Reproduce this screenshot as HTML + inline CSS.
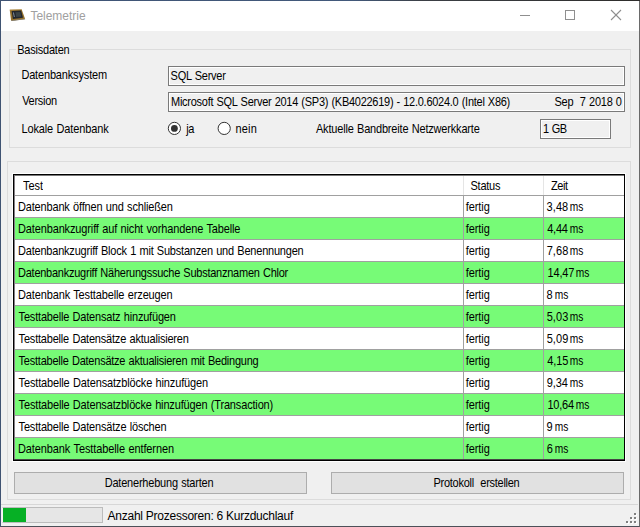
<!DOCTYPE html>
<html lang="de"><head><meta charset="utf-8"><title>Telemetrie</title>
<style>
html,body{margin:0;padding:0;}
body{width:640px;height:527px;overflow:hidden;background:#f0f0f0;position:relative;font-family:"Liberation Sans",sans-serif;font-size:11px;color:#000;}
.abs,.t{position:absolute;}
.t{white-space:nowrap;line-height:13px;height:13px;transform:scaleY(1.12);transform-origin:0 10px;word-spacing:0.5px;}
.seg{font-size:12px;line-height:15px;height:15px;transform:none;word-spacing:0;}
#win{position:absolute;left:0;top:0;width:638px;height:525px;border:1px solid #6a6a6a;border-bottom-color:#4c5058;border-left-color:#3f5372;}
#wtop{position:absolute;left:0;top:0;width:640px;height:1px;background:linear-gradient(90deg,#3f5474 0,#42597b 55%,#3b3f45 66%,#2e2d2b 100%);}
#title{position:absolute;left:1px;top:1px;width:638px;height:30px;background:#fff;}
.gb{position:absolute;border:1px solid #dcdcdc;box-sizing:border-box;}
.tb{position:absolute;border:1px solid #7a7a7a;box-shadow:inset 0 0 0 1px #fff;background:#f0f0f0;box-sizing:border-box;}
.btn{position:absolute;box-sizing:border-box;border:1px solid #adadad;background:#e1e1e1;}
.row{position:absolute;left:15px;width:609px;height:21px;}
.g{background:#77fb77;}
.w{background:#fff;}
.hl{position:absolute;background:#a0a0a0;}
</style></head><body>
<div id="title"></div>
<div id="win"></div>
<div id="wtop"></div>

<svg class="abs" style="left:0px;top:0px" width="32" height="30" viewBox="0 0 32 30">
<polygon points="9.7,9.8 21.7,9.5 25,18.7 11.1,20.4" fill="#94702b"/>
<polygon points="11.1,20.4 25,18.7 25.1,19.3 11.4,21" fill="#453a22"/>
<polygon points="9.7,9.8 21.7,9.5 21.9,10 10,10.4" fill="#b08a3e"/>
<polygon points="11.6,10.9 21.1,10.6 23,17.8 12.9,19" fill="#23272e"/>
<polygon points="15.4,12.3 20.2,12.1 21.2,16.4 16.2,16.9" fill="#3b4345"/>
<polygon points="13,12.4 13.9,12.4 14.8,17 13.9,17.1" fill="#8f9aa3"/>
</svg>
<svg class="abs" style="left:500px;top:1px" width="139" height="30" viewBox="0 0 139 30">
<g stroke="#8f8f8f" stroke-width="1" fill="none" shape-rendering="crispEdges">
<line x1="20" y1="14.5" x2="30" y2="14.5"/>
<rect x="65.5" y="9.5" width="9" height="9"/>
</g>
<g stroke="#8f8f8f" stroke-width="1.1" fill="none">
<line x1="111" y1="9" x2="121" y2="19"/><line x1="121" y1="9" x2="111" y2="19"/>
</g></svg>
<div class="gb" style="left:9px;top:49px;width:622px;height:99px;"></div>
<div class="abs" style="left:16px;top:49px;width:55px;height:1px;background:#f0f0f0;"></div>
<div class="tb" style="left:168px;top:66px;width:457px;height:20px;"></div>
<div class="tb" style="left:168px;top:92px;width:457px;height:20px;"></div>
<svg class="abs" style="left:167px;top:121px" width="70" height="15" viewBox="0 0 70 15">
<circle cx="7.4" cy="7.4" r="6.1" fill="#fff" stroke="#333" stroke-width="1"/>
<circle cx="7.4" cy="7.4" r="3.4" fill="#333"/>
<circle cx="57.2" cy="7.4" r="6.1" fill="#fff" stroke="#333" stroke-width="1"/>
</svg>
<div class="tb" style="left:540px;top:119px;width:71px;height:20px;"></div>
<div class="gb" style="left:7px;top:161px;width:624px;height:339px;"></div>
<div class="abs" style="left:12px;top:173px;width:614px;height:289px;background:#fff;"></div>
<div class="abs" style="left:13px;top:174px;width:612px;height:287px;background:#000;"></div>
<div class="abs" style="left:14px;top:175px;width:610px;height:285px;background:#a0a0a0;"></div>
<div class="abs" style="left:14px;top:175px;width:610px;height:1px;background:#787878;"></div>
<div class="abs" style="left:14px;top:176px;width:1px;height:283px;background:#858085;"></div>
<div class="abs" style="left:14px;top:459px;width:610px;height:1px;background:#454545;"></div>
<div class="row w" style="top:176px;height:19px;"></div>
<div class="row w" style="top:196px;"></div>
<div class="row g" style="top:218px;"></div>
<div class="row w" style="top:240px;"></div>
<div class="row g" style="top:262px;"></div>
<div class="row w" style="top:284px;"></div>
<div class="row g" style="top:306px;"></div>
<div class="row w" style="top:328px;"></div>
<div class="row g" style="top:350px;"></div>
<div class="row w" style="top:372px;"></div>
<div class="row g" style="top:394px;"></div>
<div class="row w" style="top:416px;"></div>
<div class="row g" style="top:438px;"></div>
<div class="hl" style="left:463px;top:176px;width:1px;height:283px;"></div>
<div class="hl" style="left:543px;top:176px;width:1px;height:283px;"></div>
<div class="hl" style="left:463px;top:176px;width:1px;height:19px;background:#e5e5e5;"></div>
<div class="hl" style="left:543px;top:176px;width:1px;height:19px;background:#e5e5e5;"></div>
<div class="btn" style="left:14px;top:472px;width:293px;height:22px;"></div>
<div class="btn" style="left:331px;top:472px;width:293px;height:22px;"></div>
<div class="abs" style="left:1px;top:504px;width:637px;height:1px;background:#d7d7d7;"></div>
<div class="abs" style="left:2px;top:507px;width:101px;height:16px;background:#e6e6e6;border:1px solid #bcbcbc;border-left-color:#f6f6f6;box-sizing:border-box;"></div>
<div class="abs" style="left:3px;top:508px;width:23px;height:14px;background:#06b025;"></div>
<svg class="abs" style="left:624px;top:511px" width="14" height="14" shape-rendering="crispEdges"><rect x="3" y="11" width="2" height="2" fill="#ffffff"/><rect x="2" y="10" width="2" height="2" fill="#7f7f7f"/><rect x="7" y="11" width="2" height="2" fill="#ffffff"/><rect x="6" y="10" width="2" height="2" fill="#7f7f7f"/><rect x="11" y="11" width="2" height="2" fill="#ffffff"/><rect x="10" y="10" width="2" height="2" fill="#7f7f7f"/><rect x="7" y="7" width="2" height="2" fill="#ffffff"/><rect x="6" y="6" width="2" height="2" fill="#7f7f7f"/><rect x="11" y="7" width="2" height="2" fill="#ffffff"/><rect x="10" y="6" width="2" height="2" fill="#7f7f7f"/><rect x="11" y="3" width="2" height="2" fill="#ffffff"/><rect x="10" y="2" width="2" height="2" fill="#7f7f7f"/></svg>
<div id="ttl" class="t seg" style="left:30.41px;top:9.0px;letter-spacing:-0.023px;color:#a0a0a0;">Telemetrie</div>
<div id="gbcap" class="t " style="left:17.18px;top:44.0px;letter-spacing:-0.212px;">Basisdaten</div>
<div id="l1" class="t " style="left:21.39px;top:69.0px;letter-spacing:-0.163px;">Datenbanksystem</div>
<div id="l2" class="t " style="left:22.15px;top:95.0px;letter-spacing:-0.291px;">Version</div>
<div id="l3" class="t " style="left:21.39px;top:123.0px;letter-spacing:-0.115px;">Lokale Datenbank</div>
<div id="v1" class="t " style="left:170.58px;top:70.0px;letter-spacing:-0.254px;">SQL Server</div>
<div id="v2" class="t " style="left:171.0px;top:96.0px;letter-spacing:-0.268px;">Microsoft SQL Server 2014 (SP3) (KB4022619) - 12.0.6024.0 (Intel X86)</div>
<div id="v3" class="t " style="left:554.43px;top:96.0px;letter-spacing:-0.25px;">Sep&nbsp; 7 2018 0</div>
<div id="r1" class="t " style="left:186.22px;top:123.0px;letter-spacing:-0.348px;">ja</div>
<div id="r2" class="t " style="left:235.61px;top:123.0px;letter-spacing:0.119px;">nein</div>
<div id="l4" class="t " style="left:315.96px;top:123.0px;letter-spacing:-0.185px;">Aktuelle Bandbreite Netzwerkkarte</div>
<div id="v4" class="t " style="left:542.98px;top:123.0px;letter-spacing:-0.505px;">1 GB</div>
<div id="h1" class="t " style="left:23.0px;top:180.0px;letter-spacing:-0.045px;">Test</div>
<div id="h2" class="t " style="left:470.46px;top:180.0px;letter-spacing:-0.224px;">Status</div>
<div id="h3" class="t " style="left:551.05px;top:180.0px;letter-spacing:-0.438px;">Zeit</div>
<div id="a0" class="t " style="left:18.0px;top:201px;letter-spacing:-0.169px;">Datenbank öffnen und schließen</div>
<div id="b0" class="t " style="left:465.84px;top:201px;letter-spacing:-0.105px;">fertig</div>
<div id="c0" class="t " style="left:546.59px;top:201px;letter-spacing:0.067px;">3,48</div>
<div id="m0" class="t " style="left:569.7px;top:201px;letter-spacing:0.0px;font-size:10.2px;transform:scaleY(1.208);">ms</div>
<div id="a1" class="t " style="left:18.0px;top:223px;letter-spacing:-0.137px;">Datenbankzugriff auf nicht vorhandene Tabelle</div>
<div id="b1" class="t " style="left:465.84px;top:223px;letter-spacing:-0.105px;">fertig</div>
<div id="c1" class="t " style="left:547.15px;top:223px;letter-spacing:-0.197px;">4,44</div>
<div id="m1" class="t " style="left:569.7px;top:223px;letter-spacing:0.0px;font-size:10.2px;transform:scaleY(1.208);">ms</div>
<div id="a2" class="t " style="left:18.0px;top:245px;letter-spacing:-0.208px;">Datenbankzugriff Block 1 mit Substanzen und Benennungen</div>
<div id="b2" class="t " style="left:465.84px;top:245px;letter-spacing:-0.105px;">fertig</div>
<div id="c2" class="t " style="left:546.68px;top:245px;letter-spacing:0.08px;">7,68</div>
<div id="m2" class="t " style="left:569.7px;top:245px;letter-spacing:0.0px;font-size:10.2px;transform:scaleY(1.208);">ms</div>
<div id="a3" class="t " style="left:18.0px;top:267px;letter-spacing:-0.247px;">Datenbankzugriff Näherungssuche Substanznamen Chlor</div>
<div id="b3" class="t " style="left:465.84px;top:267px;letter-spacing:-0.105px;">fertig</div>
<div id="c3" class="t " style="left:547.44px;top:267px;letter-spacing:-0.148px;">14,47</div>
<div id="m3" class="t " style="left:575.84px;top:267px;letter-spacing:0.0px;font-size:10.2px;transform:scaleY(1.208);">ms</div>
<div id="a4" class="t " style="left:18.0px;top:289px;letter-spacing:-0.134px;">Datenbank Testtabelle erzeugen</div>
<div id="b4" class="t " style="left:465.84px;top:289px;letter-spacing:-0.105px;">fertig</div>
<div id="c4" class="t " style="left:546.59px;top:289px;letter-spacing:0.0px;">8</div>
<div id="m4" class="t " style="left:554.7px;top:289px;letter-spacing:0.0px;font-size:10.2px;transform:scaleY(1.208);">ms</div>
<div id="a5" class="t " style="left:18.6px;top:311px;letter-spacing:-0.185px;">Testtabelle Datensatz hinzufügen</div>
<div id="b5" class="t " style="left:465.84px;top:311px;letter-spacing:-0.105px;">fertig</div>
<div id="c5" class="t " style="left:546.63px;top:311px;letter-spacing:0.093px;">5,03</div>
<div id="m5" class="t " style="left:569.7px;top:311px;letter-spacing:0.0px;font-size:10.2px;transform:scaleY(1.208);">ms</div>
<div id="a6" class="t " style="left:18.6px;top:333px;letter-spacing:-0.195px;">Testtabelle Datensätze aktualisieren</div>
<div id="b6" class="t " style="left:465.84px;top:333px;letter-spacing:-0.105px;">fertig</div>
<div id="c6" class="t " style="left:546.63px;top:333px;letter-spacing:0.073px;">5,09</div>
<div id="m6" class="t " style="left:569.7px;top:333px;letter-spacing:0.0px;font-size:10.2px;transform:scaleY(1.208);">ms</div>
<div id="a7" class="t " style="left:18.6px;top:355px;letter-spacing:-0.233px;">Testtabelle Datensätze aktualisieren mit Bedingung</div>
<div id="b7" class="t " style="left:465.84px;top:355px;letter-spacing:-0.105px;">fertig</div>
<div id="c7" class="t " style="left:547.15px;top:355px;letter-spacing:-0.088px;">4,15</div>
<div id="m7" class="t " style="left:569.7px;top:355px;letter-spacing:0.0px;font-size:10.2px;transform:scaleY(1.208);">ms</div>
<div id="a8" class="t " style="left:18.6px;top:377px;letter-spacing:-0.145px;">Testtabelle Datensatzblöcke hinzufügen</div>
<div id="b8" class="t " style="left:465.84px;top:377px;letter-spacing:-0.105px;">fertig</div>
<div id="c8" class="t " style="left:546.7px;top:377px;letter-spacing:-0.046px;">9,34</div>
<div id="m8" class="t " style="left:569.7px;top:377px;letter-spacing:0.0px;font-size:10.2px;transform:scaleY(1.208);">ms</div>
<div id="a9" class="t " style="left:18.6px;top:399px;letter-spacing:-0.16px;">Testtabelle Datensatzblöcke hinzufügen (Transaction)</div>
<div id="b9" class="t " style="left:465.84px;top:399px;letter-spacing:-0.105px;">fertig</div>
<div id="c9" class="t " style="left:547.44px;top:399px;letter-spacing:-0.234px;">10,64</div>
<div id="m9" class="t " style="left:575.84px;top:399px;letter-spacing:0.0px;font-size:10.2px;transform:scaleY(1.208);">ms</div>
<div id="a10" class="t " style="left:18.6px;top:421px;letter-spacing:-0.183px;">Testtabelle Datensätze löschen</div>
<div id="b10" class="t " style="left:465.84px;top:421px;letter-spacing:-0.105px;">fertig</div>
<div id="c10" class="t " style="left:546.62px;top:421px;letter-spacing:0.0px;">9</div>
<div id="m10" class="t " style="left:554.7px;top:421px;letter-spacing:0.0px;font-size:10.2px;transform:scaleY(1.208);">ms</div>
<div id="a11" class="t " style="left:18.0px;top:443px;letter-spacing:-0.104px;">Datenbank Testtabelle entfernen</div>
<div id="b11" class="t " style="left:465.84px;top:443px;letter-spacing:-0.105px;">fertig</div>
<div id="c11" class="t " style="left:546.63px;top:443px;letter-spacing:0.0px;">6</div>
<div id="m11" class="t " style="left:554.7px;top:443px;letter-spacing:0.0px;font-size:10.2px;transform:scaleY(1.208);">ms</div>
<div id="bt1" class="t " style="left:104.7px;top:477.0px;letter-spacing:-0.209px;">Datenerhebung starten</div>
<div id="bt2" class="t " style="left:433.55px;top:477.0px;letter-spacing:-0.281px;">Protokoll&nbsp; erstellen</div>
<div id="st" class="t seg" style="left:107.59px;top:509.0px;letter-spacing:-0.255px;">Anzahl Prozessoren: 6 Kurzduchlauf</div>
</body></html>
